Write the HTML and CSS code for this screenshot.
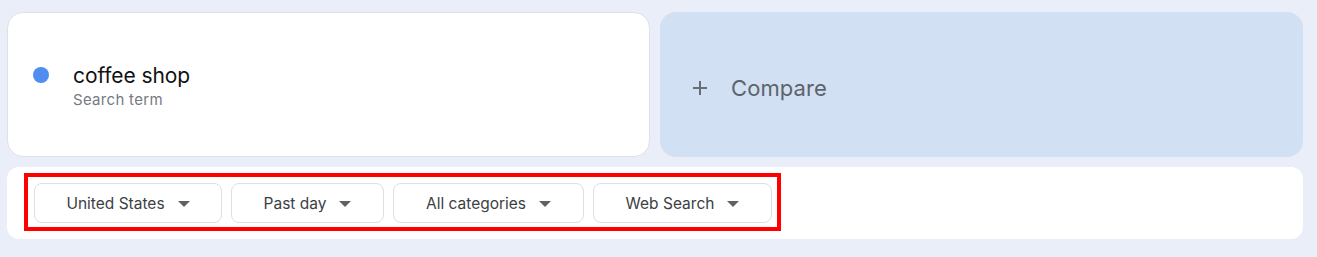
FILE: index.html
```html
<!DOCTYPE html>
<html>
<head>
<meta charset="utf-8">
<link rel="stylesheet" href="styles.css">
</head>
<body>
<div class="page">
  <div class="cards">
    <div class="card term">
      <span class="dot"></span>
      <div class="term-text">
        <div class="term-title">coffee shop</div>
        <div class="term-sub">Search term</div>
      </div>
    </div>
    <div class="card compare">
      <svg class="plus" width="16" height="16" viewBox="0 0 16 16"><path d="M8 1v14M1 8h14" stroke="#686d74" stroke-width="2" fill="none"/></svg>
      <span class="compare-label">Compare</span>
    </div>
  </div>
  <div class="filterbar">
    <div class="highlight">
      <button class="chip c1"><span>United States</span><i class="caret"></i></button>
      <button class="chip c2"><span>Past day</span><i class="caret"></i></button>
      <button class="chip c3"><span>All categories</span><i class="caret"></i></button>
      <button class="chip c4"><span>Web Search</span><i class="caret"></i></button>
    </div>
  </div>
</div>
</body>
</html>
```

FILE: styles.css
```css
html, body {
  margin: 0;
  padding: 0;
  background: #e9eef8;
  font-family: Inter, "Noto Sans", Roboto, sans-serif;
}
.page {
  padding: 12px 14px 0 7px;
  display: flex;
  flex-direction: column;
  gap: 10px;
}
.cards {
  display: grid;
  grid-template-columns: 1fr 1fr;
  gap: 10px;
  height: 145px;
}
.card {
  border-radius: 16px;
  display: flex;
  align-items: center;
  box-sizing: border-box;
}
.term {
  background: #ffffff;
  border: 1px solid #dde1e8;
  padding-left: 25px;
  gap: 24px;
}
.dot {
  width: 16px;
  height: 16px;
  border-radius: 50%;
  background: #4e8df2;
  margin-top: -19px;
}
.term-text {
  display: flex;
  flex-direction: column;
  margin-top: 4px;
}
.term-title {
  font-size: 21px;
  color: #111;
  line-height: 26px;
  letter-spacing: -0.1px;
}
.term-sub {
  font-size: 15px;
  color: #767a80;
  line-height: 20px;
  margin-top: 1px;
  letter-spacing: 0.3px;
}
.compare {
  background: #d2e0f4;
  padding-left: 32px;
  gap: 23px;
  padding-top: 6px;
}
.compare-label {
  font-size: 22px;
  color: #5d636b;
  letter-spacing: 0.1px;
}
.filterbar {
  background: #ffffff;
  border-radius: 12px;
  height: 72px;
  box-sizing: border-box;
  padding: 6px 17px;
  display: flex;
  align-items: flex-start;
}
.highlight {
  border: 4px solid #ff0000;
  padding: 6px 5px 4px 6px;
  display: flex;
  gap: 9px;
}
.chip {
  height: 40px;
  box-sizing: border-box;
  border: 1px solid #dcdfe3;
  border-radius: 8px;
  background: #fff;
  display: flex;
  align-items: center;
  justify-content: center;
  gap: 13px;
  font-family: inherit;
  font-size: 15.5px;
  color: #3c4043;
  padding: 0;
}
.c1 { width: 188px; }
.c2 { width: 153px; }
.c3 { width: 191px; }
.c4 { width: 179px; }
.caret {
  width: 0;
  height: 0;
  border-left: 6px solid transparent;
  border-right: 6px solid transparent;
  border-top: 6px solid #5f6368;
  margin-top: 1px;
}
```
